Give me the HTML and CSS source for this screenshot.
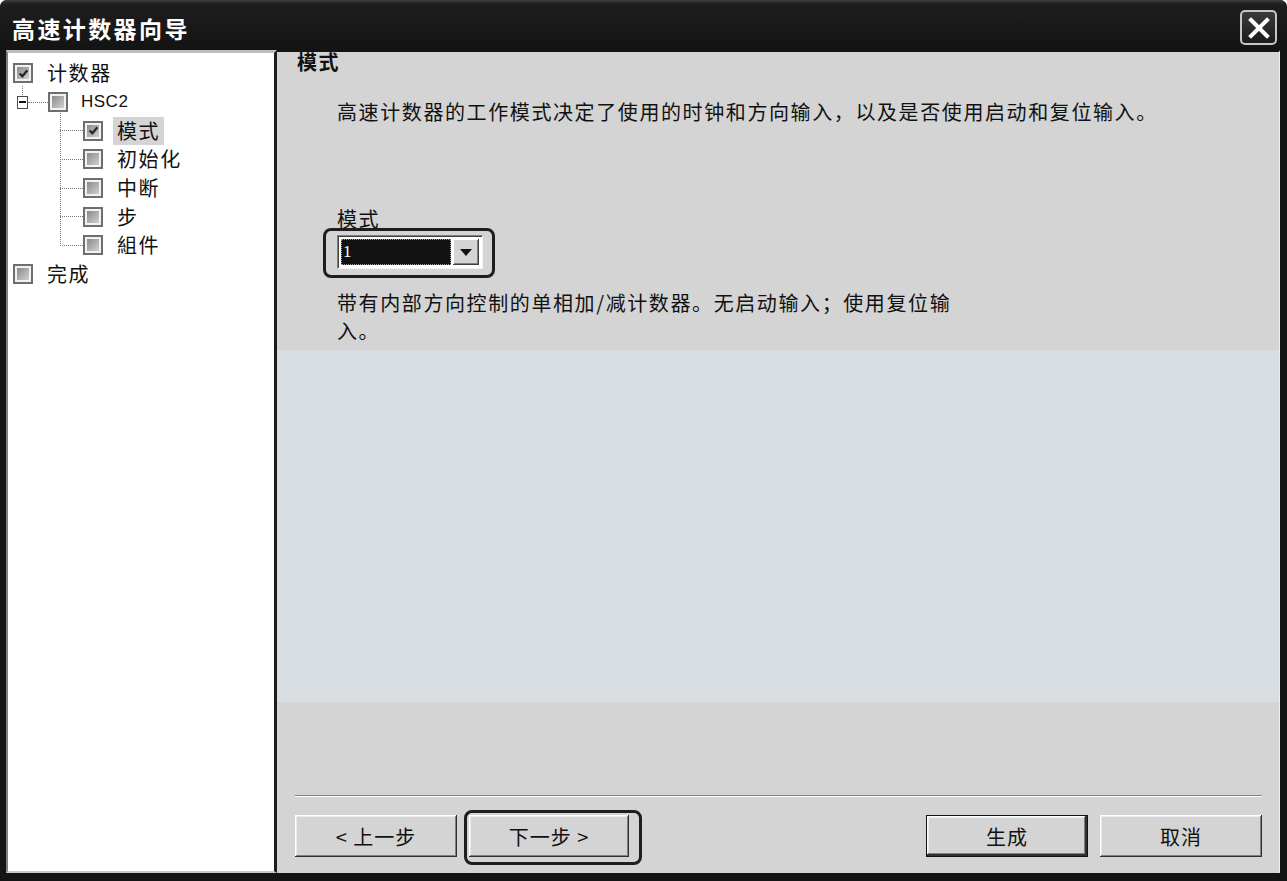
FILE: index.html
```html
<!DOCTYPE html>
<html lang="zh-CN">
<head>
    <meta charset="UTF-8" />
    <title>高速计数器向导</title>
    <link rel="stylesheet" href="styles.css">
</head>
<body>
    <div class="window">
        <div class="titlebar">
            <span class="title">高速计数器向导</span>
            <button class="close" aria-label="关闭">
                <svg width="22" height="22" viewBox="0 0 22 22"><path d="M3 3 L19 19 M19 3 L3 19" stroke="#fff" stroke-width="4" stroke-linecap="square"/></svg>
            </button>
        </div>
        <div class="body">
            <!-- Wizard steps -->
            <div class="tree">
                <div class="row lvl0">
                    <span class="cb checked"><svg viewBox="0 0 10 10"><path d="M1.5 5 L4 7.5 L8.5 2" /></svg></span>
                    <span class="label">计数器</span>
                </div>
                <div class="row lvl1">
                    <span class="expander"></span>
                    <span class="hline"></span>
                    <span class="cb"></span>
                    <span class="label latin">HSC2</span>
                </div>
                <div class="children">
                    <div class="row">
                        <span class="hline"></span>
                        <span class="cb checked"><svg viewBox="0 0 10 10"><path d="M1.5 5 L4 7.5 L8.5 2" /></svg></span>
                        <span class="label selected">模式</span>
                    </div>
                    <div class="row">
                        <span class="hline"></span>
                        <span class="cb"></span>
                        <span class="label">初始化</span>
                    </div>
                    <div class="row">
                        <span class="hline"></span>
                        <span class="cb"></span>
                        <span class="label">中断</span>
                    </div>
                    <div class="row">
                        <span class="hline"></span>
                        <span class="cb"></span>
                        <span class="label">步</span>
                    </div>
                    <div class="row">
                        <span class="hline"></span>
                        <span class="cb"></span>
                        <span class="label">組件</span>
                    </div>
                </div>
                <div class="row lvl0">
                    <span class="cb"></span>
                    <span class="label">完成</span>
                </div>
            </div>

            <div class="page">
                <div class="intro">
                    <h2 class="page-title">模式</h2>
                    <p class="desc">高速计数器的工作模式决定了使用的时钟和方向输入，以及是否使用启动和复位输入。</p>
                    <div class="field-label">模式</div>
                    <div class="mark combo-mark">
                        <div class="combo">
                            <span class="combo-value">1</span>
                            <span class="combo-arrow"></span>
                        </div>
                    </div>
                    <p class="mode-text">带有内部方向控制的单相加/减计数器。无启动输入；使用复位输<br>入。</p>
                </div>
                <div class="preview"></div>
                <div class="footer">
                    <div class="sep"></div>
                    <div class="buttons">
                        <button class="btn">&lt; 上一步</button>
                        <div class="mark btn-mark">
                            <button class="btn btn-next">下一步 &gt;</button>
                        </div>
                        <button class="btn btn-default">生成</button>
                        <button class="btn">取消</button>
                    </div>
                </div>
            </div>
        </div>
    </div>
</body>
</html>
```

FILE: styles.css
```css
:root {
    --face: #d4d4d4;
    --preview: #d8dee2;
    --frame: #141414;
    --shadow: #808080;
    --dark: #111111;
    --cjk: "Noto Sans CJK SC", "Noto Sans", sans-serif;
}
* {
    margin: 0;
    padding: 0;
    box-sizing: border-box;
}
body {
    background: #ffffff;
    font-family: var(--cjk);
    color: var(--dark);
}
.window {
    width: 1287px;
    height: 881px;
    display: flex;
    flex-direction: column;
    background: var(--frame);
    border-radius: 7px 7px 0 0;
    overflow: hidden;
}
/* Title bar */
.titlebar {
    height: 50px;
    display: flex;
    align-items: flex-start;
    padding: 0 10px 0 12px;
    background: linear-gradient(#3e3e3e 0, #1e1e1e 4px, #131313 100%);
}
.title {
    color: #ffffff;
    font-size: 23px;
    font-weight: 700;
    letter-spacing: 2.4px;
    line-height: 30px;
    margin-top: 13px;
}
.close {
    margin-left: auto;
    margin-top: 10px;
    width: 37px;
    height: 35px;
    border: 2px solid #c6c6c6;
    border-radius: 5px;
    background: linear-gradient(#3a3a3a, #1c1c1c);
    display: flex;
    align-items: center;
    justify-content: center;
}
.body {
    flex: 1;
    display: flex;
    padding: 0 7px 8px 6px;
}
/* Tree */
.tree {
    width: 271px;
    background: #ffffff;
    border-top: 3px solid #bdbdbd;
    border-left: 2px solid var(--shadow);
    border-right: 3px solid #1c1c1c;
    border-bottom: 2px solid #c8c8c8;
    padding-top: 6px;
    font-size: 20px;
    letter-spacing: 1.6px;
}
.row {
    height: 28.7px;
    display: flex;
    align-items: center;
}
.lvl0 {
    padding-left: 5px;
}
.lvl0 .label {
    margin-left: 10px;
}
.lvl1 {
    padding-left: 9px;
}
.lvl1 .label {
    margin-left: 9px;
}
.cb {
    width: 20px;
    height: 20px;
    flex: none;
    border: 2px solid #6e6e6e;
    background: linear-gradient(135deg, #7e7e7e, #dcdcdc);
    box-shadow: inset 0 0 0 2px #f2f2f2;
    display: flex;
    align-items: center;
    justify-content: center;
}
.cb svg {
    width: 11px;
    height: 11px;
}
.cb svg path {
    fill: none;
    stroke: #2a2a2a;
    stroke-width: 2.2;
}
.label {
    padding: 0 4px;
    line-height: 28px;
    white-space: nowrap;
}
.label.latin {
    font-family: "Liberation Sans", sans-serif;
    font-size: 17px;
    letter-spacing: 0.5px;
}
.label.selected {
    background: var(--face);
}
.expander {
    width: 11px;
    height: 13px;
    flex: none;
    border: 1px solid #4a4a4a;
    background: linear-gradient(#111, #111) center / 7px 2px no-repeat #ffffff;
    position: relative;
}
.expander::before {
    content: "";
    position: absolute;
    left: 4px;
    top: -11px;
    height: 9px;
    border-left: 1px dotted #777;
}
.hline {
    width: 20px;
    flex: none;
    border-top: 1px dotted #777;
}
.children {
    margin-left: 52px;
    position: relative;
}
.children::before {
    content: "";
    position: absolute;
    left: 0;
    top: -6px;
    bottom: 14px;
    border-left: 1px dotted #777;
}
.children .hline {
    width: 23px;
}
.children .label {
    margin-left: 10px;
}
/* Page */
.page {
    flex: 1;
    display: flex;
    flex-direction: column;
    border-top: 2px solid var(--frame);
    border-right: 1px solid #ededed;
    background: var(--face);
}
.intro {
    height: 298px;
    padding-left: 60px;
    font-size: 20px;
    letter-spacing: 1.6px;
}
.page-title {
    margin: -3px 0 0 -40px;
    font-size: 20px;
    font-weight: 700;
    line-height: 26px;
}
.desc {
    margin-top: 23px;
    line-height: 28px;
}
.field-label {
    margin-top: 80px;
    line-height: 26px;
    text-decoration: underline;
    text-decoration-thickness: 1px;
    text-underline-offset: 3px;
}
.mark {
    border: 3px solid #1e1e1e;
    border-radius: 8px;
}
.combo-mark {
    display: inline-block;
    margin: -4px 0 0 -14px;
    padding: 4px 9px 6px 11px;
}
.combo {
    width: 146px;
    height: 34px;
    display: flex;
    padding: 3px;
    background: #ffffff;
    border: 1px solid var(--shadow);
    border-right-color: #f4f4f4;
    border-bottom-color: #f4f4f4;
    box-shadow: inset 1px 1px 0 #404040;
}
.combo-value {
    flex: 1;
    background: #121212;
    color: #ffffff;
    font-family: "Liberation Serif", serif;
    font-size: 17px;
    letter-spacing: 0;
    line-height: 26px;
    padding-left: 2px;
    outline: 1px dotted #9a9a9a;
    outline-offset: -1px;
}
.combo-arrow {
    width: 26px;
    margin-left: 2px;
    background: var(--face);
    box-shadow: inset -1px -1px 0 #404040, inset 1px 1px 0 #ffffff, inset -2px -2px 0 var(--shadow);
    display: flex;
    align-items: center;
    justify-content: center;
}
.combo-arrow::after {
    content: "";
    border-left: 6px solid transparent;
    border-right: 6px solid transparent;
    border-top: 7px solid #111;
}
.mode-text {
    margin-top: 11px;
    line-height: 28px;
}
.preview {
    height: 352px;
    background: var(--preview);
}
.footer {
    flex: 1;
    padding: 0 17px 0 18px;
}
.sep {
    margin-top: 93px;
    height: 2px;
    border-top: 1px solid var(--shadow);
    border-bottom: 1px solid #ffffff;
}
.buttons {
    margin-top: 18px;
    height: 42px;
    display: flex;
    align-items: flex-start;
}
.btn {
    width: 162px;
    height: 42px;
    flex: none;
    border: none;
    background: var(--face);
    box-shadow: inset -1px -1px 0 #303030, inset 1px 1px 0 #ffffff, inset -2px -2px 0 var(--shadow), inset 2px 2px 0 #ececec;
    font-family: var(--cjk);
    font-size: 20px;
    letter-spacing: 1px;
    color: var(--dark);
}
.btn-mark {
    margin: -5px 0 0 7px;
    padding: 2px 10px 5px 2px;
}
.btn-next {
    width: 160px;
}
.btn-default {
    margin-left: auto;
    border: 1px solid #111;
    box-shadow: inset -2px -2px 0 #303030, inset 1px 1px 0 #ffffff, inset -3px -3px 0 var(--shadow), inset 2px 2px 0 #ececec;
}
.btn-default + .btn {
    margin-left: 12px;
}
```
